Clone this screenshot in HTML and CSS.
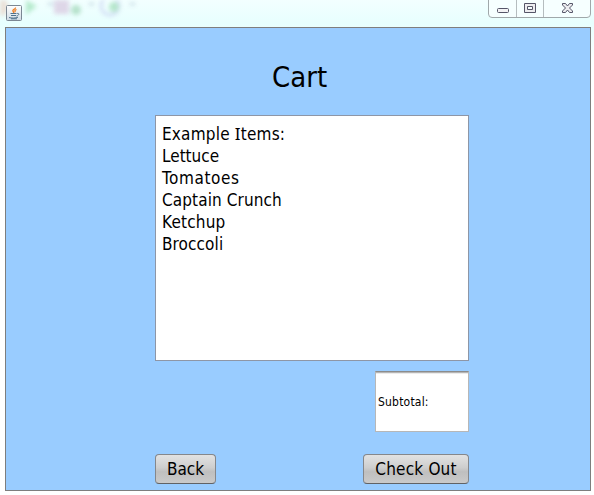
FILE: index.html
```html
<!DOCTYPE html>
<html lang="en">
<head>
<meta charset="utf-8">
<title>Cart</title>
<link rel="stylesheet" href="styles.css">
</head>
<body>
<div class="window">
  <header class="titlebar">
    <svg class="glass" width="160" height="27" aria-hidden="true">
      <ellipse cx="2" cy="7" rx="6" ry="9" fill="#e9ddd3"/>
      <path d="M26 0L37 6L26 15Z" fill="#b0e8c8"/>
      <rect x="54" y="0" width="15" height="14" fill="#ddd3e6"/>
      <circle cx="76" cy="10" r="5" fill="#b0dfc6"/>
      <circle cx="110" cy="6" r="9" fill="none" stroke="#cfdbf3" stroke-width="3"/>
      <circle cx="114" cy="7" r="5" fill="#b0e4c6"/>
      <path d="M48 4h5M89 4h5M130 4h5" stroke="#c5dae3" stroke-width="3"/>
    </svg>
    <svg class="java" width="16" height="16" viewBox="0 0 16 16">
      <defs><linearGradient id="tile" x2="0" y2="1"><stop stop-color="#fff"/><stop offset="1" stop-color="#cfdce5"/></linearGradient></defs>
      <rect x=".5" y=".5" width="15" height="15" rx="1" fill="url(#tile)" stroke="#7b8793"/>
      <path d="M9.5 2.500C10 4 6 4.800 7 6.200L8 8M10.500 4.500C8.500 5.500 8.500 6 9.500 7" fill="none" stroke="#ee7d22" stroke-width="1.300"/>
      <path d="M4.500 8.500h6M5 10.500h5M11 8.500c3-.5 2 2-.5 2.500M3 12.500c2 .8 7 .8 9-.3M5 13.800h6" fill="none" stroke="#4f718c"/>
    </svg>
    <svg class="controls" width="104" height="19" viewBox="0 0 104 19">
      <path d="M.5 0V14Q.5 17.500 4 17.500H99Q102.500 17.500 102.500 14V0" fill="#f6ffff" stroke="#a0a8aa"/>
      <path d="M28.500 0V17M55.500 0V17" stroke="#b5bdbf"/>
      <rect x="9.500" y="8.500" width="11" height="4" rx="1" fill="#f3f3f5" stroke="#555568"/>
      <path fill-rule="evenodd" d="M36.500 3.500h11v9h-11zM39.500 6.500h5v3h-5z" fill="#ededf0" stroke="#555568"/>
      <path d="M74.500 3.500h3l2 2.500 2-2.500h3v1.500l-3 3 3 3v1.500h-3l-2-2.500-2 2.500h-3V11l3-3-3-3z" fill="#ededf0" stroke="#555568"/>
    </svg>
  </header>
  <main class="frame">
    <h1 class="heading">Cart</h1>
    <div class="items">
      <div class="wide">Example <span class="serifed">I</span>tems:</div>
      <div>Lettuce</div>
      <div class="wider">Tomatoes</div>
      <div class="medium">Captain Crunch</div>
      <div class="wide">Ketchup</div>
      <div class="medium">Broccoli</div>
    </div>
    <div class="subtotal">Subtotal:</div>
    <div class="actions">
      <button class="back">Back</button>
      <button class="checkout">Check Out</button>
    </div>
  </main>
</div>
</body>
</html>
```
FILE: styles.css
```css
* { box-sizing: border-box; }
body {
  margin: 0;
  font-family: "DejaVu Sans Condensed", "DejaVu Sans", sans-serif;
  font-stretch: condensed;
  color: #000;
}
.window {
  width: 594px;
  height: 495px;
  overflow: hidden;
  padding: 0 3px 4px 5px;
  background: linear-gradient(#f3ffff 0, #e7fffe 24px, #fbffff 60px, #fff 100px);
}
.titlebar {
  position: relative;
  height: 27px;
  display: flex;
  justify-content: space-between;
  align-items: flex-start;
}
.glass { position: absolute; left: -5px; top: 0; filter: blur(2px); opacity: .9; }
.java { position: relative; margin: 5px 0 0 1px; }
.controls { margin-right: -1px; }
.frame {
  width: 586px;
  height: 464px;
  border: 1px solid #7e7e7e;
  background: #99ccff;
  padding: 31px 121px 0 149px;
}
.heading {
  margin: 0;
  height: 56px;
  padding-left: 117px;
  font-size: 29px;
  font-weight: normal;
  line-height: 37px;
}
.items {
  width: 314px;
  height: 246px;
  padding: 7px 6px;
  background: #fff;
  border: 1px solid #8e96a6;
  font-size: 17px;
  line-height: 22px;
  white-space: nowrap;
}
.medium { letter-spacing: .1px; }
.wide { letter-spacing: .2px; }
.wider { letter-spacing: .6px; }
.serifed { font-family: "Noto Sans", sans-serif; line-height: 1; }
.subtotal {
  width: 94px;
  height: 61px;
  margin: 10px 0 0 220px;
  padding: 0 2px;
  border: 1px solid #b7b7b7;
  border-top: 1px solid #8c8c8c;
  background: #fff;
  box-shadow: inset 0 1px #b5b5b5, inset 0 2px #ececec;
  font-size: 12px;
  line-height: 60px;
  letter-spacing: .2px;
}
.actions {
  display: flex;
  justify-content: space-between;
  width: 314px;
  margin-top: 22px;
}
button {
  height: 30px;
  padding: 0;
  border: 1px solid #85878b;
  border-bottom-color: #606265;
  border-radius: 4px;
  background: linear-gradient(#e2e2e2, #cecece 45%, #bfbfbf 60%, #cacaca);
  font: inherit;
  font-size: 17px;
  line-height: 29px;
  color: #000;
}
.back { width: 61px; }
.checkout { width: 106px; letter-spacing: .2px; }
```
